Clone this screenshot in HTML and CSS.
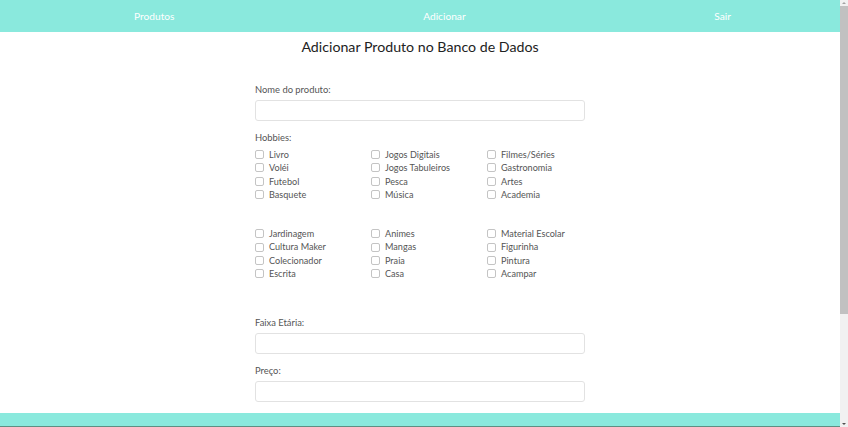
FILE: index.html
```html
<!DOCTYPE html>
<html lang="pt-BR">
<head>
<meta charset="utf-8">
<title>Adicionar Produto</title>
<link rel="stylesheet" href="styles.css">
</head>
<body>
<div class="frame">
  <div class="page">
    <nav class="nav">
      <a href="#">Produtos</a>
      <a href="#">Adicionar</a>
      <a href="#">Sair</a>
    </nav>
    <main class="main">
      <h1 class="title">Adicionar Produto no Banco de Dados</h1>
      <form class="form">
        <label class="label">Nome do produto:</label>
        <input class="input" type="text">
        <label class="label">Hobbies:</label>
        <div class="group">
          <label class="check"><span class="box"></span>Livro</label>
          <label class="check"><span class="box"></span>Jogos Digitais</label>
          <label class="check"><span class="box"></span>Filmes/Séries</label>
          <label class="check"><span class="box"></span>Voléi</label>
          <label class="check"><span class="box"></span>Jogos Tabuleiros</label>
          <label class="check"><span class="box"></span>Gastronomia</label>
          <label class="check"><span class="box"></span>Futebol</label>
          <label class="check"><span class="box"></span>Pesca</label>
          <label class="check"><span class="box"></span>Artes</label>
          <label class="check"><span class="box"></span>Basquete</label>
          <label class="check"><span class="box"></span>Música</label>
          <label class="check"><span class="box"></span>Academia</label>
        </div>
        <div class="group group2">
          <label class="check"><span class="box"></span>Jardinagem</label>
          <label class="check"><span class="box"></span>Animes</label>
          <label class="check"><span class="box"></span>Material Escolar</label>
          <label class="check"><span class="box"></span>Cultura Maker</label>
          <label class="check"><span class="box"></span>Mangas</label>
          <label class="check"><span class="box"></span>Figurinha</label>
          <label class="check"><span class="box"></span>Colecionador</label>
          <label class="check"><span class="box"></span>Praia</label>
          <label class="check"><span class="box"></span>Pintura</label>
          <label class="check"><span class="box"></span>Escrita</label>
          <label class="check"><span class="box"></span>Casa</label>
          <label class="check"><span class="box"></span>Acampar</label>
        </div>
        <label class="label label-faixa">Faixa Etária:</label>
        <input class="input" type="text">
        <label class="label">Preço:</label>
        <input class="input" type="text">
      </form>
    </main>
    <footer class="footer"></footer>
  </div>
  <div class="scrollbar">
    <span class="arrow up"></span>
    <span class="thumb"></span>
    <span class="track"></span>
    <span class="arrow down"></span>
  </div>
</div>
</body>
</html>
```
FILE: styles.css
```css
* { box-sizing: border-box; }
html, body { margin: 0; padding: 0; }
body {
  height: 427px;
  overflow: hidden;
  font-family: Lato, "Open Sans", sans-serif;
  color: #555;
  background: #fff;
}
.frame { display: flex; height: 427px; }
.page { flex: 1; display: flex; flex-direction: column; min-width: 0; }
.nav {
  height: 32px;
  background: #8ae9dd;
  display: flex;
  align-items: center;
  justify-content: space-between;
  padding: 0 109px 0 134px;
}
.nav a {
  color: #fff;
  text-decoration: none;
  font-size: 10.2px;
}
.main { flex: 1; display: flex; flex-direction: column; align-items: center; }
.title {
  margin: 5px 0 0;
  font-size: 14.2px;
  font-weight: 400;
  color: #222;
  line-height: 20px;
}
.form {
  width: 330px;
  display: flex;
  flex-direction: column;
  margin-top: 26px;
}
.label { font-size: 9.4px; line-height: 13px; color: #555; }
.input {
  height: 21px;
  border: 1px solid #e2e2e2;
  border-radius: 3px;
  margin: 4px 0 10px;
  padding: 0;
  background: #fff;
}
.group {
  display: grid;
  grid-template-columns: 116px 116px 98px;
  margin-top: 4px;
}
.group2 { margin-top: 26px; }
.check {
  display: flex;
  align-items: center;
  font-size: 9.1px;
  line-height: 13.3px;
  color: #555;
}
.box {
  width: 9px;
  height: 9px;
  border: 1px solid #c4c4c4;
  border-radius: 2px;
  margin-right: 5px;
  flex: none;
}
.label-faixa { margin-top: 36px; }
.footer {
  height: 14px;
  background: #8ae9dd;
  border-bottom: 1px solid #5e8f82;
  flex: none;
}
.scrollbar {
  width: 8px;
  background: #f1f1f1;
  display: flex;
  flex-direction: column;
  align-items: center;
}
.arrow { width: 8px; height: 6px; flex: none; display: flex; justify-content: center; align-items: center; }
.arrow.up::before {
  content: "";
  border-left: 2px solid transparent;
  border-right: 2px solid transparent;
  border-bottom: 2px solid #a3a3a3;
}
.arrow.down::before {
  content: "";
  border-left: 2px solid transparent;
  border-right: 2px solid transparent;
  border-top: 2px solid #505050;
}
.thumb { width: 8px; height: 308px; background: #c1c1c1; flex: none; }
.track { flex: 1; }
```
